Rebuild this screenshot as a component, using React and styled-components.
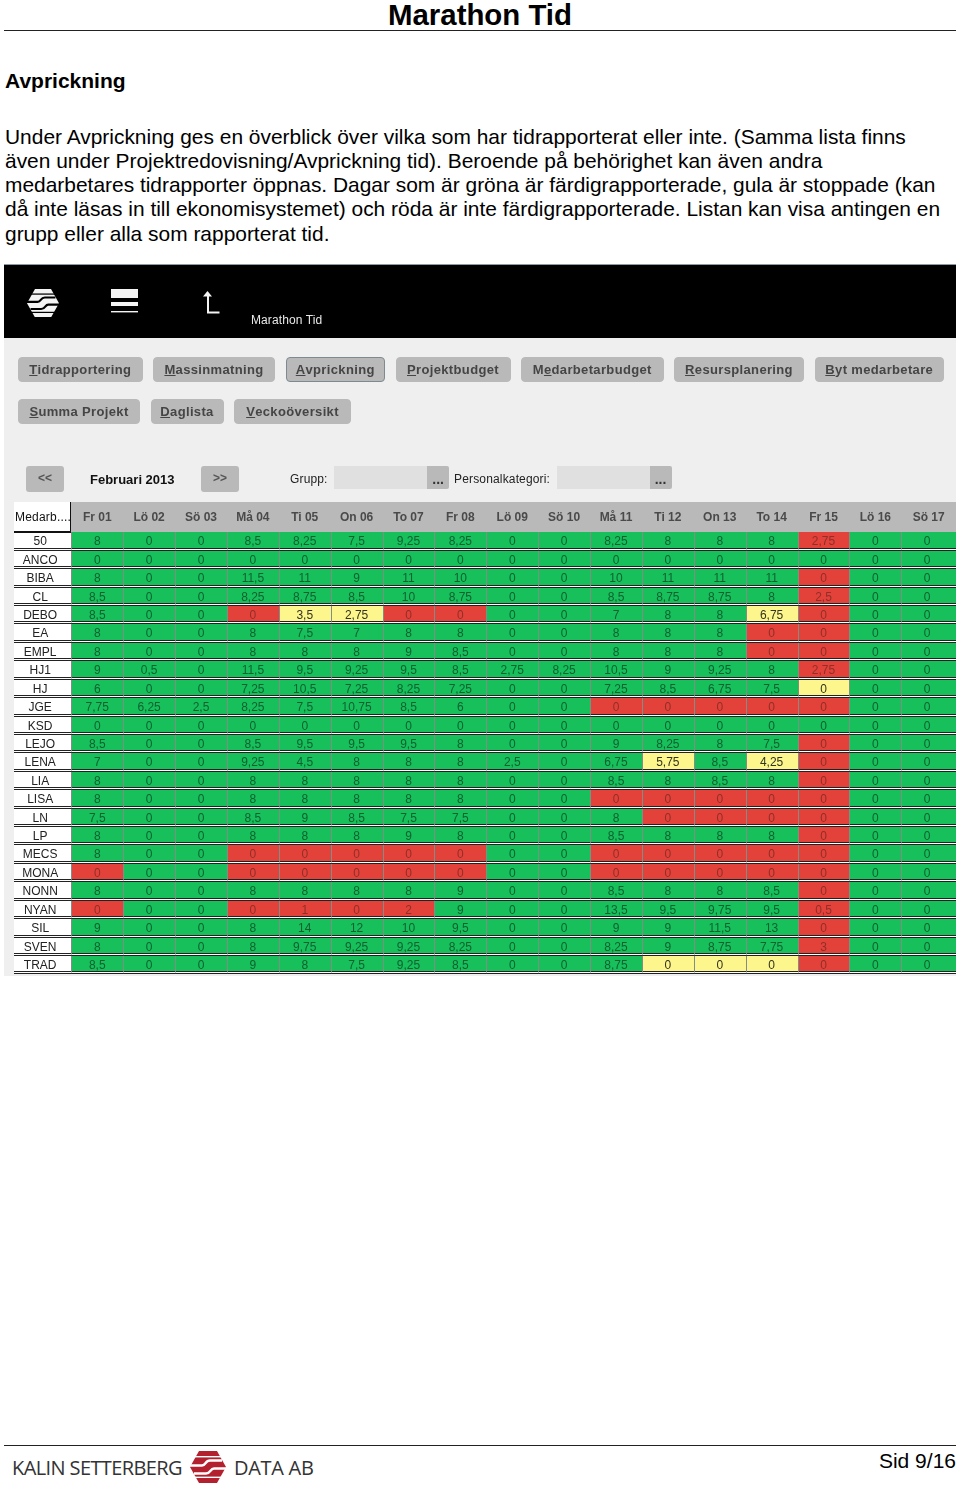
import React from "react";
import styled, { createGlobalStyle } from "styled-components";

const NAV_ROWS = [
  [
    { pre: "", key: "T", rest: "idrapportering", width: 124.5 },
    { pre: "", key: "M", rest: "assinmatning", width: 122 },
    { pre: "", key: "A", rest: "vprickning", width: 99.5, active: true },
    { pre: "", key: "P", rest: "rojektbudget", width: 115 },
    { pre: "M", key: "e", rest: "darbetarbudget", width: 142.5 },
    { pre: "", key: "R", rest: "esursplanering", width: 130 },
    { pre: "", key: "B", rest: "yt medarbetare", width: 129.5 },
  ],
  [
    { pre: "", key: "S", rest: "umma Projekt", width: 122 },
    { pre: "", key: "D", rest: "aglista", width: 73 },
    { pre: "", key: "V", rest: "eckoöversikt", width: 117 },
  ],
];

const DAYS = [
  "Fr 01", "Lö 02", "Sö 03", "Må 04", "Ti 05", "On 06", "To 07", "Fr 08", "Lö 09",
  "Sö 10", "Må 11", "Ti 12", "On 13", "To 14", "Fr 15", "Lö 16", "Sö 17",
];

// r = inte färdigrapporterad, y = stoppad, annars grön
const ROWS = [
  ["50", "8 0 0 8,5 8,25 7,5 9,25 8,25 0 0 8,25 8 8 8 2,75r 0 0"],
  ["ANCO", "0 0 0 0 0 0 0 0 0 0 0 0 0 0 0 0 0"],
  ["BIBA", "8 0 0 11,5 11 9 11 10 0 0 10 11 11 11 0r 0 0"],
  ["CL", "8,5 0 0 8,25 8,75 8,5 10 8,75 0 0 8,5 8,75 8,75 8 2,5r 0 0"],
  ["DEBO", "8,5 0 0 0r 3,5y 2,75y 0r 0r 0 0 7 8 8 6,75y 0r 0 0"],
  ["EA", "8 0 0 8 7,5 7 8 8 0 0 8 8 8 0r 0r 0 0"],
  ["EMPL", "8 0 0 8 8 8 9 8,5 0 0 8 8 8 0r 0r 0 0"],
  ["HJ1", "9 0,5 0 11,5 9,5 9,25 9,5 8,5 2,75 8,25 10,5 9 9,25 8 2,75r 0 0"],
  ["HJ", "6 0 0 7,25 10,5 7,25 8,25 7,25 0 0 7,25 8,5 6,75 7,5 0y 0 0"],
  ["JGE", "7,75 6,25 2,5 8,25 7,5 10,75 8,5 6 0 0 0r 0r 0r 0r 0r 0 0"],
  ["KSD", "0 0 0 0 0 0 0 0 0 0 0 0 0 0 0 0 0"],
  ["LEJO", "8,5 0 0 8,5 9,5 9,5 9,5 8 0 0 9 8,25 8 7,5 0r 0 0"],
  ["LENA", "7 0 0 9,25 4,5 8 8 8 2,5 0 6,75 5,75y 8,5 4,25y 0r 0 0"],
  ["LIA", "8 0 0 8 8 8 8 8 0 0 8,5 8 8,5 8 0r 0 0"],
  ["LISA", "8 0 0 8 8 8 8 8 0 0 0r 0r 0r 0r 0r 0 0"],
  ["LN", "7,5 0 0 8,5 9 8,5 7,5 7,5 0 0 8 0r 0r 0r 0r 0 0"],
  ["LP", "8 0 0 8 8 8 9 8 0 0 8,5 8 8 8 0r 0 0"],
  ["MECS", "8 0 0 0r 0r 0r 0r 0r 0 0 0r 0r 0r 0r 0r 0 0"],
  ["MONA", "0r 0 0 0r 0r 0r 0r 0r 0 0 0r 0r 0r 0r 0r 0 0"],
  ["NONN", "8 0 0 8 8 8 8 9 0 0 8,5 8 8 8,5 0r 0 0"],
  ["NYAN", "0r 0 0 0r 1r 0r 2r 9 0 0 13,5 9,5 9,75 9,5 0,5r 0 0"],
  ["SIL", "9 0 0 8 14 12 10 9,5 0 0 9 9 11,5 13 0r 0 0"],
  ["SVEN", "8 0 0 8 9,75 9,25 9,25 8,25 0 0 8,25 9 8,75 7,75 3r 0 0"],
  ["TRAD", "8,5 0 0 9 8 7,5 9,25 8,5 0 0 8,75 0y 0y 0y 0r 0 0"],
];

const GRID_COLUMNS = "57.3px repeat(16, 51.875px) 1fr";

const CELL_COLORS = {
  g: { bg: "#17c05b", fg: "#0f6030" },
  r: { bg: "#e3423a", fg: "#8f2f28" },
  y: { bg: "#fdf68c", fg: "#33331f" },
};

const parseCell = (raw) => {
  const last = raw[raw.length - 1];
  if (last === "r" || last === "y") return { value: raw.slice(0, -1), status: last };
  return { value: raw, status: "g" };
};

const Logo = ({ color, gap, size }) => (
  <svg width={size} height={size * 0.89} viewBox="0 0 36 32">
    <polygon points="9,0 27,0 36,16 27,32 9,32 0,16" fill={color} />
    <g fill={gap}>
      <rect x="0" y="5" width="36" height="1.4" />
      <rect x="0" y="25.6" width="36" height="1.4" />
    </g>
    <path d="M0 14.5 H12 C16 14.5 15 9.5 20 9.5 H32" fill="none" stroke={gap} strokeWidth="2.4" />
    <path d="M36 17.5 H24 C20 17.5 21 22.5 16 22.5 H4" fill="none" stroke={gap} strokeWidth="2.4" />
  </svg>
);

const App = () => {
  return (
    <Page>
      <GlobalStyle />
      <Title>Marathon Tid</Title>
      <Heading>Avprickning</Heading>
      <Intro>
        Under Avprickning ges en överblick över vilka som har tidrapporterat eller inte. (Samma lista finns
        även under Projektredovisning/Avprickning tid). Beroende på behörighet kan även andra
        medarbetares tidrapporter öppnas. Dagar som är gröna är färdigrapporterade, gula är stoppade (kan
        då inte läsas in till ekonomisystemet) och röda är inte färdigrapporterade. Listan kan visa antingen en
        grupp eller alla som rapporterat tid.
      </Intro>

      <Shot>
        <TopBar>
          <TopIcons>
            <Logo color="#f4f4f4" gap="#000" size={32} />
            <MenuIcon width="28" height="24" viewBox="0 0 28 24">
              <rect x="0" y="0" width="27" height="9" fill="#f4f4f4" />
              <rect x="0" y="13" width="27" height="4" fill="#f4f4f4" />
              <rect x="0" y="22" width="27" height="1.4" fill="#f4f4f4" />
            </MenuIcon>
            <UpIcon width="18" height="24" viewBox="0 0 18 24">
              <path d="M5.5 0 L10 5.5 H7 V20.5 H17.5 V22.5 H5 V5.5 H1 Z" fill="#f4f4f4" />
            </UpIcon>
          </TopIcons>
          <TopLabel>Marathon Tid</TopLabel>
        </TopBar>

        <Nav>
          {NAV_ROWS.map((row, i) => (
            <NavRow key={i}>
              {row.map((item) => (
                <NavButton key={item.key + item.rest} $width={item.width} $active={item.active}>
                  {item.pre}
                  <u>{item.key}</u>
                  {item.rest}
                </NavButton>
              ))}
            </NavRow>
          ))}
        </Nav>

        <Filters>
          <PageButton>&lt;&lt;</PageButton>
          <Month>Februari 2013</Month>
          <PageButton>&gt;&gt;</PageButton>
          <FilterLabel $left={51}>Grupp:</FilterLabel>
          <FilterInput />
          <DotsButton>...</DotsButton>
          <FilterLabel $left={5}>Personalkategori:</FilterLabel>
          <FilterInput />
          <DotsButton>...</DotsButton>
        </Filters>

        <Table>
          <HeadRow>
            <NameHead>Medarb....</NameHead>
            {DAYS.map((day) => (
              <DayHead key={day}>{day}</DayHead>
            ))}
          </HeadRow>
          {ROWS.map(([name, cells]) => (
            <Row key={name}>
              <NameCell>{name}</NameCell>
              {cells.split(" ").map((raw, i) => {
                const { value, status } = parseCell(raw);
                return (
                  <Cell key={i} $status={status}>
                    {value}
                  </Cell>
                );
              })}
            </Row>
          ))}
        </Table>
      </Shot>

      <Footer>
        <Brand>
          <BrandText $spacing={-0.6}>KALIN SETTERBERG</BrandText>
          <Logo color="#b3202e" gap="#fff" size={36} />
          <BrandText $spacing={-0.3}>DATA AB</BrandText>
        </Brand>
        <PageNumber>Sid 9/16</PageNumber>
      </Footer>
    </Page>
  );
};

const GlobalStyle = createGlobalStyle`
  html, body {
    margin: 0;
    padding: 0;
    background: #fff;
  }
  body {
    font-family: "Liberation Sans", Arial, sans-serif;
    color: #000;
  }
`;

const Page = styled.div`
  width: 952px;
  height: 1491px;
  padding: 0 4px;
  display: flex;
  flex-direction: column;
`;

const Title = styled.h1`
  margin: 0;
  height: 30px;
  line-height: 29px;
  font-size: 29.4px;
  font-weight: 700;
  text-align: center;
  border-bottom: 1px solid #222;
`;

const Heading = styled.h2`
  margin: 38px 0 0 1px;
  font-size: 21px;
  line-height: 24px;
  font-weight: 700;
`;

const Intro = styled.p`
  margin: 32px 0 0 1px;
  font-size: 20.93px;
  line-height: 24.15px;
`;

const Shot = styled.div`
  margin-top: 18px;
  height: 711px;
  border-top: 1px solid #8c9aa8;
  background: #efefef;
  filter: blur(0.3px);
`;

const TopBar = styled.div`
  height: 73px;
  background: #000;
  position: relative;
`;

const TopIcons = styled.div`
  display: flex;
  align-items: flex-start;
  padding: 24px 0 0 23px;
`;

const MenuIcon = styled.svg`
  margin-left: 52px;
`;

const UpIcon = styled.svg`
  margin-left: 63px;
  margin-top: 2px;
`;

const TopLabel = styled.span`
  position: absolute;
  left: 247px;
  top: 48px;
  color: #e8e8e8;
  font-size: 12px;
  line-height: 14px;
  letter-spacing: 0.1px;
`;

const Nav = styled.div`
  padding: 19px 0 0 14px;
  display: flex;
  flex-direction: column;
  gap: 16.5px;
`;

const NavRow = styled.div`
  display: flex;
  gap: 10.5px;
`;

const NavButton = styled.div`
  box-sizing: border-box;
  width: ${(p) => p.$width}px;
  height: 25.5px;
  display: flex;
  align-items: center;
  justify-content: center;
  white-space: pre;
  background: #b9b9b9;
  border: 1px solid ${(p) => (p.$active ? "#7f8a90" : "#b9b9b9")};
  border-radius: 4px;
  color: #454545;
  font-size: 13px;
  font-weight: 700;
  letter-spacing: 0.35px;
`;

const Filters = styled.div`
  margin: 42px 0 0 22px;
  display: flex;
  align-items: flex-start;
  height: 26px;
`;

const PageButton = styled.div`
  width: 38px;
  height: 26px;
  background: #b9b9b9;
  border-radius: 3px;
  color: #555;
  font-size: 12px;
  font-weight: 700;
  line-height: 25px;
  text-align: center;
`;

const Month = styled.div`
  width: 137px;
  padding-left: 26px;
  box-sizing: border-box;
  font-size: 13px;
  font-weight: 700;
  line-height: 27px;
  color: #111;
`;

const FilterLabel = styled.div`
  margin-left: ${(p) => p.$left}px;
  flex: none;
  font-size: 12px;
  line-height: 27px;
  color: #222;
  letter-spacing: 0.15px;
`;

const FilterInput = styled.div`
  width: 93px;
  height: 23px;
  margin-left: 6.5px;
  background: #e0e0e0;
`;

const DotsButton = styled.div`
  width: 22px;
  height: 23px;
  background: #b9b9b9;
  border-radius: 0 2px 2px 0;
  color: #333;
  font-size: 14px;
  font-weight: 700;
  line-height: 27px;
  text-align: center;
`;

const Table = styled.div`
  margin: 10px 0 0 10px;
`;

const HeadRow = styled.div`
  display: grid;
  grid-template-columns: ${GRID_COLUMNS};
  height: 30px;
  background: #b9b9b9;
`;

const NameHead = styled.div`
  background: #fff;
  border-right: 1px solid #111;
  border-bottom: 2px solid #111;
  box-sizing: border-box;
  color: #111;
  font-size: 12px;
  letter-spacing: 0.2px;
  line-height: 30px;
  white-space: nowrap;
  padding-left: 1px;
  overflow: hidden;
`;

const DayHead = styled.div`
  color: #4a4a4a;
  font-size: 12px;
  font-weight: 700;
  line-height: 31px;
  text-align: center;
`;

const Row = styled.div`
  display: grid;
  grid-template-columns: ${GRID_COLUMNS};
  grid-template-rows: 18.43px;
  background: #fff;
`;

const NameCell = styled.div`
  box-sizing: border-box;
  min-height: 0;
  border-bottom: 3px double #222;
  padding-right: 5px;
  color: #222;
  font-size: 12px;
  line-height: 19px;
  text-align: center;
`;

const Cell = styled.div`
  box-sizing: border-box;
  min-height: 0;
  border-bottom: 3px double #222;
  border-left: 1px solid #7f8f86;
  background-color: ${(p) => CELL_COLORS[p.$status].bg};
  background-clip: padding-box;
  color: ${(p) => CELL_COLORS[p.$status].fg};
  font-size: 12px;
  line-height: 19px;
  text-align: center;
  padding-right: 1px;
  &:last-child {
    padding-right: 4px;
  }
`;

const Footer = styled.footer`
  margin-top: auto;
  height: 45px;
  border-top: 1px solid #222;
  display: flex;
  justify-content: space-between;
  align-items: flex-start;
`;

const Brand = styled.div`
  display: flex;
  align-items: center;
  gap: 8px;
  padding: 5px 0 0 8px;
`;

const BrandText = styled.span`
  font-family: "Open Sans", sans-serif;
  font-size: 20px;
  letter-spacing: ${(p) => p.$spacing}px;
  color: #333;
`;

const PageNumber = styled.div`
  font-size: 21px;
  line-height: 29px;
`;

export default App;
